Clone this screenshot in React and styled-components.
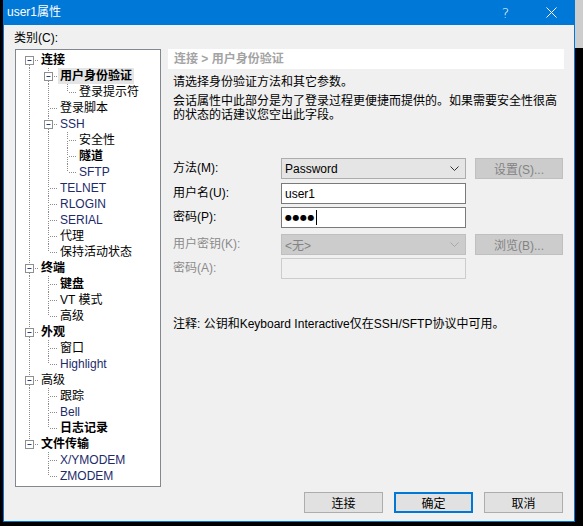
import React from 'react';
import styled, { createGlobalStyle } from 'styled-components';

const GlobalStyle = createGlobalStyle`
  html, body { margin: 0; padding: 0; }
  body {
    background: #000;
    font-family: "Liberation Sans", "Noto Sans CJK SC", sans-serif;
    font-size: 12px;
    color: #000;
  }
  * { box-sizing: border-box; }
`;

const Screen = styled.div`
  width: 583px;
  height: 526px;
  overflow: hidden;
  padding-left: 3px;
  background: linear-gradient(#cdcdcd, #cdcdcd) no-repeat right top / 8px 48px, #000;
`;

const Dialog = styled.div`
  width: 572px;
  height: 522px;
  border: 1px solid #0078d7;
  border-top: none;
  background: #f0f0f0;
  display: flex;
  flex-direction: column;
`;

const TitleBar = styled.div`
  height: 25px;
  flex: none;
  background: #0078d7;
  color: #fff;
  display: flex;
  align-items: center;
  padding-left: 3px;
`;

const Title = styled.div`
  flex: 1;
  font-size: 12px;
  line-height: 25px;
`;

const CaptionButton = styled.div`
  width: ${(p) => p.$w}px;
  height: 25px;
  display: flex;
  align-items: center;
  justify-content: center;
  color: #fff;
  font-size: 14px;
  font-family: "DejaVu Sans", sans-serif;
  font-weight: 300;
`;

const Body = styled.div`
  flex: 1;
  display: flex;
  flex-direction: column;
  padding: 5px 10px 8px 11px;
`;

const CategoryLabel = styled.div`
  height: 16px;
  line-height: 16px;
  margin: 0 0 3px -1px;
`;

const Main = styled.div`
  height: 438px;
  display: flex;
  gap: 7px;
`;

const TreeBox = styled.div`
  width: 146px;
  flex: none;
  height: 438px;
  border: 1px solid #828790;
  background: #fff;
  padding: 2px 0 0 4px;
  display: flex;
  flex-direction: column;
  overflow: hidden;
`;

const TreeRow = styled.div`
  height: 16px;
  display: flex;
  align-items: stretch;
`;

const GuideCell = styled.svg`
  width: 19px;
  height: 16px;
  flex: none;
  display: block;
`;

const NodeLabel = styled.span`
  padding: 0 2px;
  line-height: 16px;
  white-space: nowrap;
  font-weight: ${(p) => (p.$bold ? 700 : 400)};
  color: ${(p) => (p.$latin ? '#1d2b6b' : '#000')};
  background: ${(p) => (p.$selected ? '#e5e5e5' : 'transparent')};
`;

const Panel = styled.div`
  flex: 1;
  min-width: 0;
  display: flex;
  flex-direction: column;
`;

const PanelHeader = styled.div`
  height: 20px;
  line-height: 20px;
  background: #fff;
  padding-left: 6px;
  font-weight: 700;
  color: #a3a3a3;
`;

const Para = styled.div`
  margin-top: ${(p) => p.$mt}px;
  padding-left: 5px;
  line-height: ${(p) => p.$lh}px;
  white-space: nowrap;
`;

const Form = styled.div`
  margin-top: 36px;
  padding-left: 5px;
  display: flex;
  flex-direction: column;
`;

const FormRow = styled.div`
  margin-top: ${(p) => p.$mt}px;
  display: grid;
  grid-template-columns: 99px 185px 88px;
  column-gap: 9px;
  height: 21px;
  align-items: center;
`;

const FieldLabel = styled.div`
  color: ${(p) => (p.$disabled ? '#8b8b8b' : '#000')};
  line-height: 21px;
`;

const Combo = styled.div`
  height: 21px;
  border: 1px solid ${(p) => (p.$disabled ? '#bfbfbf' : '#adadad')};
  background: ${(p) => (p.$disabled ? '#cccccc' : '#e5e5e5')};
  color: ${(p) => (p.$disabled ? '#838383' : '#000')};
  display: flex;
  align-items: center;
  padding: 0 6px 0 3px;
  justify-content: space-between;
`;

const Edit = styled.div`
  height: 21px;
  border: 1px solid ${(p) => (p.$disabled ? '#cccccc' : '#7a7a7a')};
  background: ${(p) => (p.$disabled ? '#f0f0f0' : '#fff')};
  display: flex;
  align-items: center;
  padding-left: 3px;
`;

const Dots = styled.span`
  font-family: "DejaVu Sans", sans-serif;
  font-size: 8px;
  letter-spacing: 0.5px;
  line-height: 1;
`;

const Caret = styled.span`
  width: 1px;
  height: 15px;
  background: #000;
  margin-left: 1px;
`;

const SideButton = styled.div`
  height: 21px;
  border: 1px solid #bfbfbf;
  background: #cccccc;
  color: #838383;
  display: flex;
  align-items: center;
  justify-content: center;
`;

const Footer = styled.div`
  margin-top: 5px;
  display: flex;
  justify-content: flex-end;
  gap: 11px;
  padding-right: 1px;
`;

const Button = styled.div`
  width: 79px;
  height: 21px;
  border: ${(p) => (p.$default ? '2px solid #0078d7' : '1px solid #adadad')};
  background: #e1e1e1;
  display: flex;
  align-items: center;
  justify-content: center;
`;

const Chevron = ({ color }) => (
  <svg width="9" height="5" viewBox="0 0 9 5">
    <polyline points="0.5,0.5 4.5,4.5 8.5,0.5" fill="none" stroke={color} strokeWidth="1" />
  </svg>
);

const CloseIcon = () => (
  <svg width="11" height="11" viewBox="0 0 11 11">
    <line x1="0.5" y1="0.5" x2="10.5" y2="10.5" stroke="#fff" strokeWidth="1" />
    <line x1="10.5" y1="0.5" x2="0.5" y2="10.5" stroke="#fff" strokeWidth="1" />
  </svg>
);

const items = [
  [0, '连接', { b: 1, exp: 1 }],
  [1, '用户身份验证', { b: 1, exp: 1, sel: 1 }],
  [2, '登录提示符', {}],
  [1, '登录脚本', {}],
  [1, 'SSH', { exp: 1, latin: 1 }],
  [2, '安全性', {}],
  [2, '隧道', { b: 1 }],
  [2, 'SFTP', { latin: 1 }],
  [1, 'TELNET', { latin: 1 }],
  [1, 'RLOGIN', { latin: 1 }],
  [1, 'SERIAL', { latin: 1 }],
  [1, '代理', {}],
  [1, '保持活动状态', {}],
  [0, '终端', { b: 1, exp: 1 }],
  [1, '键盘', { b: 1 }],
  [1, 'VT 模式', {}],
  [1, '高级', {}],
  [0, '外观', { b: 1, exp: 1 }],
  [1, '窗口', {}],
  [1, 'Highlight', { latin: 1 }],
  [0, '高级', { exp: 1 }],
  [1, '跟踪', {}],
  [1, 'Bell', { latin: 1 }],
  [1, '日志记录', { b: 1 }],
  [0, '文件传输', { b: 1, exp: 1 }],
  [1, 'X/YMODEM', { latin: 1 }],
  [1, 'ZMODEM', { latin: 1 }],
];

const hasNextSibling = (i) => {
  const L = items[i][0];
  for (let j = i + 1; j < items.length; j++) {
    if (items[j][0] < L) return false;
    if (items[j][0] === L) return true;
  }
  return false;
};

const ancestorAt = (i, level) => {
  for (let j = i; j >= 0; j--) if (items[j][0] === level) return j;
  return -1;
};

const LINE = '#8c8c8c';

const Guide = ({ top, bottom, horiz, box, full }) => (
  <GuideCell viewBox="0 0 19 16">
    {full && <line x1="9.5" y1="0" x2="9.5" y2="16" stroke={LINE} strokeDasharray="1 1" />}
    {top && <line x1="9.5" y1="0" x2="9.5" y2="8" stroke={LINE} strokeDasharray="1 1" />}
    {bottom && <line x1="9.5" y1="9" x2="9.5" y2="16" stroke={LINE} strokeDasharray="1 1" />}
    {horiz && <line x1="11" y1="8.5" x2="19" y2="8.5" stroke={LINE} strokeDasharray="1 1" />}
    {box && (
      <g>
        <rect x="5.5" y="4.5" width="8" height="8" fill="#fff" stroke="#8f8f8f" />
        <line x1="7.5" y1="8.5" x2="11.5" y2="8.5" stroke="#24407e" />
      </g>
    )}
  </GuideCell>
);

const Tree = () => (
  <TreeBox>
    {items.map(([level, label, o], i) => {
      const cells = [];
      for (let c = 0; c < level; c++) {
        const a = ancestorAt(i, c);
        cells.push(<Guide key={c} full={hasNextSibling(a)} />);
      }
      cells.push(
        <Guide
          key={level}
          top={i !== 0}
          bottom={hasNextSibling(i)}
          horiz
          box={!!o.exp}
        />
      );
      return (
        <TreeRow key={i}>
          {cells}
          <NodeLabel $bold={!!o.b} $latin={!!o.latin} $selected={!!o.sel}>
            {label}
          </NodeLabel>
        </TreeRow>
      );
    })}
  </TreeBox>
);

export default function App() {
  return (
    <>
      <GlobalStyle />
      <Screen>
        <Dialog>
          <TitleBar>
            <Title>user1属性</Title>
            <CaptionButton $w={47}>?</CaptionButton>
            <CaptionButton $w={45}>
              <CloseIcon />
            </CaptionButton>
          </TitleBar>
          <Body>
            <CategoryLabel>类别(C):</CategoryLabel>
            <Main>
              <Tree />
              <Panel>
                <PanelHeader>连接 &gt; 用户身份验证</PanelHeader>
                <Para $mt={5} $lh={16}>请选择身份验证方法和其它参数。</Para>
                <Para $mt={4} $lh={14}>
                  会话属性中此部分是为了登录过程更便捷而提供的。如果需要安全性很高
                  <br />
                  的状态的话建议您空出此字段。
                </Para>
                <Form>
                  <FormRow $mt={0}>
                    <FieldLabel>方法(M):</FieldLabel>
                    <Combo>
                      <span>Password</span>
                      <Chevron color="#333" />
                    </Combo>
                    <SideButton>设置(S)...</SideButton>
                  </FormRow>
                  <FormRow $mt={4}>
                    <FieldLabel>用户名(U):</FieldLabel>
                    <Edit>user1</Edit>
                  </FormRow>
                  <FormRow $mt={3}>
                    <FieldLabel>密码(P):</FieldLabel>
                    <Edit>
                      <Dots>●●●●</Dots>
                      <Caret />
                    </Edit>
                  </FormRow>
                  <FormRow $mt={6}>
                    <FieldLabel $disabled>用户密钥(K):</FieldLabel>
                    <Combo $disabled>
                      <span>&lt;无&gt;</span>
                      <Chevron color="#a8a8a8" />
                    </Combo>
                    <SideButton>浏览(B)...</SideButton>
                  </FormRow>
                  <FormRow $mt={3}>
                    <FieldLabel $disabled>密码(A):</FieldLabel>
                    <Edit $disabled />
                  </FormRow>
                </Form>
                <Para $mt={37} $lh={16}>
                  注释: 公钥和Keyboard Interactive仅在SSH/SFTP协议中可用。
                </Para>
              </Panel>
            </Main>
            <Footer>
              <Button>连接</Button>
              <Button $default>确定</Button>
              <Button>取消</Button>
            </Footer>
          </Body>
        </Dialog>
      </Screen>
    </>
  );
}
